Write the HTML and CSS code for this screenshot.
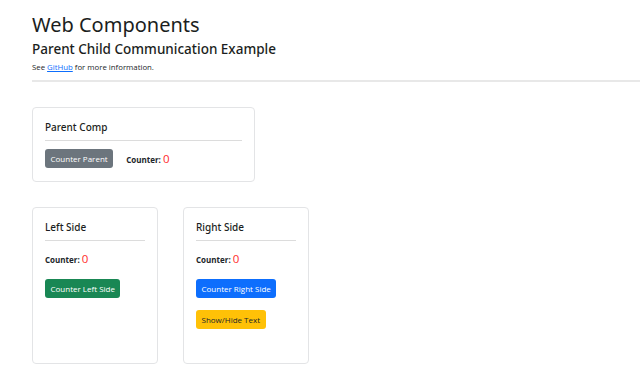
FILE: index.html
```html
<!DOCTYPE html>
<html lang="en">
<head>
  <meta charset="UTF-8">
  <meta name="viewport" content="width=device-width, initial-scale=1.0">
  <title>Web Components</title>
  <link rel="stylesheet" href="styles.css">
</head>
<body>
  <div class="page">
    <header class="page-header">
      <h1>Web Components</h1>
      <h2>Parent Child Communication Example</h2>
      <p class="note">See <a href="#">GitHub</a> for more information.</p>
    </header>
    <hr class="page-rule">

    <section class="card parent-card">
      <h3 class="card-title">Parent Comp</h3>
      <hr class="card-rule">
      <div class="parent-row">
        <button class="btn btn-secondary">Counter Parent</button>
        <div class="counter"><b>Counter:</b> <span class="count">0</span></div>
      </div>
    </section>

    <div class="child-row">
      <section class="card child-card">
        <h3 class="card-title">Left Side</h3>
        <hr class="card-rule">
        <div class="counter"><b>Counter:</b> <span class="count">0</span></div>
        <div class="stack">
          <button class="btn btn-success">Counter Left Side</button>
        </div>
      </section>
      <section class="card child-card">
        <h3 class="card-title">Right Side</h3>
        <hr class="card-rule">
        <div class="counter"><b>Counter:</b> <span class="count">0</span></div>
        <div class="stack">
          <button class="btn btn-primary">Counter Right Side</button>
          <button class="btn btn-warning">Show/Hide Text</button>
        </div>
      </section>
    </div>
  </div>
</body>
</html>
```

FILE: styles.css
```css
:root {
  --text: #212529;
  --border: #e3e4e6;
  --primary: #0d6efd;
  --secondary: #6c757d;
  --success: #198754;
  --warning: #ffc107;
  --danger: #ff2b2b;
}

* {
  box-sizing: border-box;
}

body {
  margin: 0;
  font-family: 'Open Sans', 'Noto Sans', sans-serif;
  color: var(--text);
  background: #fff;
}

.page {
  padding: 11px 0 0 32px;
}

.page-header h1,
.page-header h2,
.card-title {
  font-family: 'Noto Sans', 'Open Sans', sans-serif;
  font-weight: 500;
  color: #1b1e21;
}

.page-header h1 {
  margin: 0;
  font-size: 20px;
  font-weight: 400;
  line-height: 28px;
}

.page-header h2 {
  margin: 0;
  font-size: 13.5px;
  line-height: 20px;
}

.note {
  margin: 2px 0 0;
  font-size: 7.8px;
  line-height: 12px;
}

.note a {
  color: var(--primary);
}

.page-rule {
  margin: 7px 0 25px;
  border: 0;
  border-top: 2px solid #e8e8e8;
}

.card {
  border: 1px solid var(--border);
  border-radius: 4px;
  padding: 12px 12px;
}

.parent-card {
  width: 223px;
  height: 75px;
}

.card-title {
  margin: 0;
  font-size: 10px;
  line-height: 14px;
}

.card-rule {
  margin: 6px 0 8px;
  border: 0;
  border-top: 1px solid #dcdcdc;
}

.parent-row {
  display: flex;
  align-items: center;
  gap: 13px;
}

.counter {
  font-size: 8px;
  line-height: 15px;
}

.counter b {
  font-weight: 700;
}

.count {
  color: var(--danger);
  font-size: 11.5px;
}

.child-row {
  display: flex;
  gap: 25px;
  margin-top: 25px;
}

.child-card {
  width: 126px;
  height: 157px;
}

.child-card .counter {
  margin-top: 10px;
}

.stack {
  display: flex;
  flex-direction: column;
  align-items: flex-start;
  gap: 12px;
  margin-top: 12px;
}

.btn {
  font-family: inherit;
  font-size: 8px;
  line-height: 11px;
  padding: 4px 5.5px;
  border: 0;
  border-radius: 3px;
  color: #fff;
}

.btn-secondary {
  background: var(--secondary);
}

.btn-success {
  background: var(--success);
}

.btn-primary {
  background: var(--primary);
}

.btn-warning {
  background: var(--warning);
  color: var(--text);
}
```
